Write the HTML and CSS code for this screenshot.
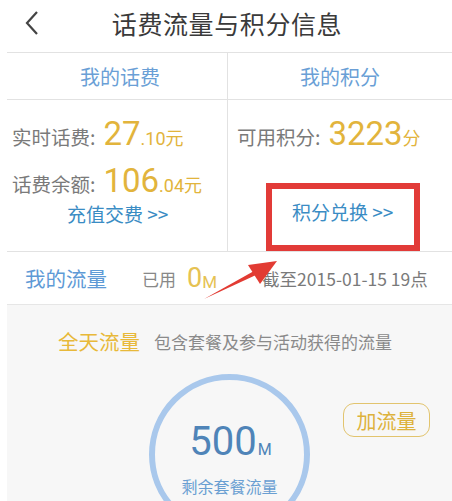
FILE: index.html
```html
<!DOCTYPE html>
<html lang="zh">
<head>
<meta charset="utf-8">
<link rel="stylesheet" href="styles.css">
</head>
<body>
<div class="page">
  <header class="topbar">
    <svg class="back" width="16" height="26" viewBox="0 0 16 26"><path d="M13 2 L3 13 L13 24" fill="none" stroke="#444" stroke-width="2.2"/></svg>
    <h1 class="title">话费流量与积分信息</h1>
  </header>

  <section class="cards">
    <div class="card card-left">
      <div class="card-head">我的话费</div>
      <div class="card-body">
        <div class="line"><span class="label">实时话费:</span><span class="big">27</span><span class="small">.10元</span></div>
        <div class="line"><span class="label">话费余额:</span><span class="big">106</span><span class="small">.04元</span></div>
        <div class="link">充值交费 &gt;&gt;</div>
      </div>
    </div>
    <div class="card card-right">
      <div class="card-head">我的积分</div>
      <div class="card-body">
        <div class="line"><span class="label">可用积分:</span><span class="big">3223</span><span class="small">分</span></div>
        <div class="link link-r">积分兑换 &gt;&gt;</div>
      </div>
    </div>
  </section>

  <section class="flow-row">
    <span class="flow-title">我的流量</span>
    <span class="used">已用</span>
    <span class="zero">0</span><span class="unit">M</span>
    <span class="date">截至2015-01-15 19点</span>
  </section>

  <section class="panel">
    <div class="panel-head"><span class="allday">全天流量</span><span class="desc">包含套餐及参与活动获得的流量</span></div>
    <div class="gauge-row">
      <div class="spacer"></div>
      <div class="ring">
        <div class="amount"><span class="num">500</span><span class="m">M</span></div>
        <div class="remain">剩余套餐流量</div>
      </div>
      <div class="side"><span class="addbtn">加流量</span></div>
    </div>
  </section>

  <div class="redbox"></div>
  <svg class="arrow" width="452" height="501" viewBox="0 0 452 501">
    <polygon points="204,299 254,271 256,275" fill="#e23b33"/>
    <polygon points="277,261 248,265 260,284" fill="#e23b33"/>
  </svg>
</div>
</body>
</html>
```
FILE: styles.css
```css
html, body {
  margin: 0;
  padding: 0;
  background: #ffffff;
}
.page {
  position: relative;
  width: 452px;
  height: 501px;
  overflow: hidden;
  font-family: "Noto Sans CJK SC", "Noto Sans", sans-serif;
  color: #777;
}
.topbar {
  height: 52px;
  display: flex;
  align-items: center;
  position: relative;
}
.back {
  position: absolute;
  left: 24px;
  top: 10px;
}
.title {
  margin: 0 auto;
  font-size: 25px;
  font-weight: 400;
  color: #3a3a3a;
  letter-spacing: 0.6px;
  padding-left: 2px;
  line-height: 30px;
  margin-top: -6px;
}
.cards {
  margin-left: 7px;
  border-top: 1px solid #e2e2e2;
  border-bottom: 1px solid #e2e2e2;
  display: grid;
  grid-template-columns: 221px 1fr;
  height: 198px;
}
.card-left {
  border-right: 1px solid #e2e2e2;
}
.card-head {
  height: 46px;
  border-bottom: 1px solid #e2e2e2;
  display: flex;
  align-items: center;
  justify-content: center;
  font-size: 20px;
  color: #6a9fd6;
}
.card-left .card-head { padding-left: 6px; }
.card-body {
  display: flex;
  flex-direction: column;
}
.card-left .card-body { padding: 16px 0 0 5px; }
.card-right .card-body { padding: 16px 0 0 9px; }
.line {
  display: flex;
  align-items: baseline;
  height: 36px;
  margin-bottom: 11px;
}
.label {
  font-size: 19.5px;
  color: #7a7a7a;
  margin-right: 8px;
}
.big {
  font-family: Roboto, "Noto Sans", sans-serif;
  font-size: 33px;
  color: #e2b43c;
  line-height: 36px;
}
.small {
  font-size: 18px;
  color: #e2b43c;
  font-family: Roboto, "Noto Sans CJK SC", sans-serif;
}
.link {
  font-size: 19px;
  color: #3a8cc4;
  margin-top: -10px;
  padding-left: 55px;
}
.link-r {
  margin-top: 35px;
  padding-left: 55px;
}
.flow-row {
  height: 52px;
  border-bottom: 1px solid #e6e6e6;
  margin-left: 7px;
  display: flex;
  align-items: center;
  padding-left: 18px;
}
.flow-title {
  font-size: 20.5px;
  color: #5e9ad6;
  margin-right: 35px;
}
.used {
  font-size: 17px;
  color: #888;
  margin-right: 11px;
}
.zero {
  font-family: Roboto, sans-serif;
  font-size: 27px;
  color: #e6c252;
}
.unit {
  font-family: Roboto, sans-serif;
  font-size: 17px;
  color: #e6c252;
  margin-top: 8px;
  margin-right: 45px;
}
.date {
  font-size: 17.5px;
  color: #7a7a7a;
  font-family: "Noto Sans CJK SC", sans-serif;
}
.panel {
  margin-left: 7px;
  background: #f7f7f7;
  height: 200px;
  padding-top: 22px;
  box-sizing: border-box;
}
.panel-head {
  display: flex;
  align-items: center;
  padding-left: 51px;
  height: 28px;
}
.allday {
  font-size: 20.5px;
  color: #e8b93a;
  margin-right: 14px;
}
.desc {
  font-size: 17px;
  color: #8a8a8a;
}
.gauge-row {
  display: grid;
  grid-template-columns: 1fr 161px 1fr;
  margin-top: 19px;
}
.ring {
  width: 161px;
  height: 161px;
  box-sizing: border-box;
  border: 6px solid #a9c8ec;
  border-radius: 50%;
  display: flex;
  flex-direction: column;
  align-items: center;
  padding-top: 38px;
}
.amount {
  display: flex;
  align-items: baseline;
  color: #4f84b8;
  font-family: Roboto, sans-serif;
  padding-left: 2px;
}
.num { font-size: 40px; line-height: 48px; }
.m { font-size: 16px; margin-left: 1px; }
.remain {
  margin-top: 8px;
  font-size: 16px;
  color: #6a9fd2;
}
.side {
  display: flex;
  justify-content: flex-end;
  padding-right: 22px;
  padding-top: 29px;
  align-items: flex-start;
}
.addbtn {
  display: inline-flex;
  align-items: center;
  justify-content: center;
  width: 87px;
  height: 34px;
  box-sizing: border-box;
  border: 1.5px solid #e2c46e;
  border-radius: 11px;
  font-size: 20px;
  color: #ddb23c;
}
.redbox {
  position: absolute;
  left: 266px;
  top: 183px;
  width: 154px;
  height: 68px;
  box-sizing: border-box;
  border: 6px solid #e23b38;
}
.arrow {
  position: absolute;
  left: 0;
  top: 0;
  pointer-events: none;
}
```
